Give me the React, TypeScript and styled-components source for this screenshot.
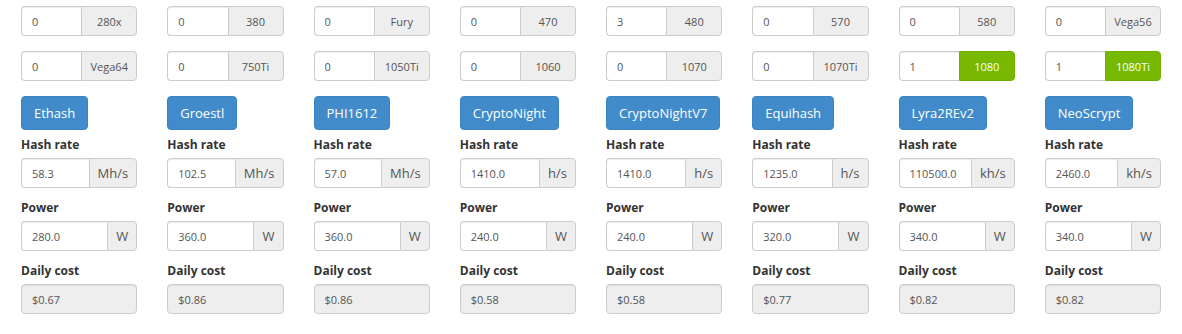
import React from 'react';
import styled, { createGlobalStyle } from 'styled-components';

const GlobalStyle = createGlobalStyle`
  *, *::before, *::after { box-sizing: border-box; }
  body {
    margin: 0;
    background: #fff;
    font-family: "Open Sans", "Noto Sans", sans-serif;
    color: #333;
  }
`;

const Container = styled.div`
  width: 1170px;
  margin: 0 auto;
  padding-top: 6px;
`;

const Grid = styled.div<{ $rowGap?: number; $bottom?: number }>`
  display: grid;
  grid-template-columns: repeat(8, minmax(0, 1fr));
  row-gap: ${(p) => p.$rowGap ?? 0}px;
  margin-bottom: ${(p) => p.$bottom ?? 0}px;
`;

const Cell = styled.div`
  min-width: 0;
  padding: 0 15px;
  display: flex;
  flex-direction: column;
`;

const InputGroup = styled.div`
  display: flex;
  height: 30px;
  width: 100%;
`;

const TextInput = styled.input`
  flex: 1 1 0;
  width: 0;
  min-width: 0;
  height: 30px;
  padding: 0 10px;
  font: 11px "Open Sans", "Noto Sans", sans-serif;
  color: #555;
  background: #fff;
  border: 1px solid #ccc;
  border-right: 0;
  border-radius: 4px 0 0 4px;
  box-shadow: inset 0 1px 1px rgba(0, 0, 0, 0.075);
  outline: none;
`;

const Addon = styled.span<{ $width?: number; $active?: boolean; $size: number }>`
  flex: none;
  display: flex;
  align-items: center;
  justify-content: center;
  width: ${(p) => (p.$width ? `${p.$width}px` : 'auto')};
  padding: 0 8px;
  font-size: ${(p) => p.$size}px;
  color: ${(p) => (p.$active ? '#fff' : '#555')};
  background: ${(p) => (p.$active ? '#76b900' : '#eee')};
  border: 1px solid ${(p) => (p.$active ? '#70b000' : '#ccc')};
  border-radius: 0 4px 4px 0;
  white-space: nowrap;
`;

const AlgoButton = styled.button`
  align-self: flex-start;
  height: 34px;
  padding: 0 12px;
  font: 13px "Open Sans", "Noto Sans", sans-serif;
  color: #fff;
  background: #428bca;
  border: 1px solid #3a84c4;
  border-radius: 4px;
  cursor: pointer;
`;

const Fields = styled.div`
  display: flex;
  flex-direction: column;
  gap: 11px;
  padding-top: 6px;
`;

const Field = styled.div`
  display: flex;
  flex-direction: column;
`;

const Label = styled.label`
  font-size: 12px;
  font-weight: 700;
  line-height: 18px;
  margin-bottom: 4px;
  color: #333;
`;

const ReadOnlyBox = styled.input`
  width: 100%;
  min-width: 0;
  height: 30px;
  padding: 0 10px;
  font: 11px "Open Sans", "Noto Sans", sans-serif;
  color: #555;
  background: #eee;
  border: 1px solid #ccc;
  border-radius: 4px;
  box-shadow: inset 0 1px 1px rgba(0, 0, 0, 0.075);
  outline: none;
`;

type Gpu = { name: string; count: number; active?: boolean };

const gpus: Gpu[] = [
  { name: '280x', count: 0 },
  { name: '380', count: 0 },
  { name: 'Fury', count: 0 },
  { name: '470', count: 0 },
  { name: '480', count: 3 },
  { name: '570', count: 0 },
  { name: '580', count: 0 },
  { name: 'Vega56', count: 0 },
  { name: 'Vega64', count: 0 },
  { name: '750Ti', count: 0 },
  { name: '1050Ti', count: 0 },
  { name: '1060', count: 0 },
  { name: '1070', count: 0 },
  { name: '1070Ti', count: 0 },
  { name: '1080', count: 1, active: true },
  { name: '1080Ti', count: 1, active: true },
];

type Algo = { name: string; rate: string; unit: string; power: string; cost: string };

const algos: Algo[] = [
  { name: 'Ethash', rate: '58.3', unit: 'Mh/s', power: '280.0', cost: '$0.67' },
  { name: 'Groestl', rate: '102.5', unit: 'Mh/s', power: '360.0', cost: '$0.86' },
  { name: 'PHI1612', rate: '57.0', unit: 'Mh/s', power: '360.0', cost: '$0.86' },
  { name: 'CryptoNight', rate: '1410.0', unit: 'h/s', power: '240.0', cost: '$0.58' },
  { name: 'CryptoNightV7', rate: '1410.0', unit: 'h/s', power: '240.0', cost: '$0.58' },
  { name: 'Equihash', rate: '1235.0', unit: 'h/s', power: '320.0', cost: '$0.77' },
  { name: 'Lyra2REv2', rate: '110500.0', unit: 'kh/s', power: '340.0', cost: '$0.82' },
  { name: 'NeoScrypt', rate: '2460.0', unit: 'kh/s', power: '340.0', cost: '$0.82' },
];

export default function App() {
  return (
    <>
      <GlobalStyle />
      <Container>
        <Grid $rowGap={15} $bottom={15}>
          {gpus.map((g) => (
            <Cell key={g.name}>
              <InputGroup>
                <TextInput defaultValue={String(g.count)} />
                <Addon $width={56} $size={11} $active={g.active}>
                  {g.name}
                </Addon>
              </InputGroup>
            </Cell>
          ))}
        </Grid>
        <Grid>
          {algos.map((a) => (
            <Cell key={a.name}>
              <AlgoButton type="button">{a.name}</AlgoButton>
              <Fields>
                <Field>
                  <Label>Hash rate</Label>
                  <InputGroup>
                    <TextInput defaultValue={a.rate} />
                    <Addon $size={13}>{a.unit}</Addon>
                  </InputGroup>
                </Field>
                <Field>
                  <Label>Power</Label>
                  <InputGroup>
                    <TextInput defaultValue={a.power} />
                    <Addon $size={13}>W</Addon>
                  </InputGroup>
                </Field>
                <Field>
                  <Label>Daily cost</Label>
                  <ReadOnlyBox readOnly defaultValue={a.cost} />
                </Field>
              </Fields>
            </Cell>
          ))}
        </Grid>
      </Container>
    </>
  );
}
